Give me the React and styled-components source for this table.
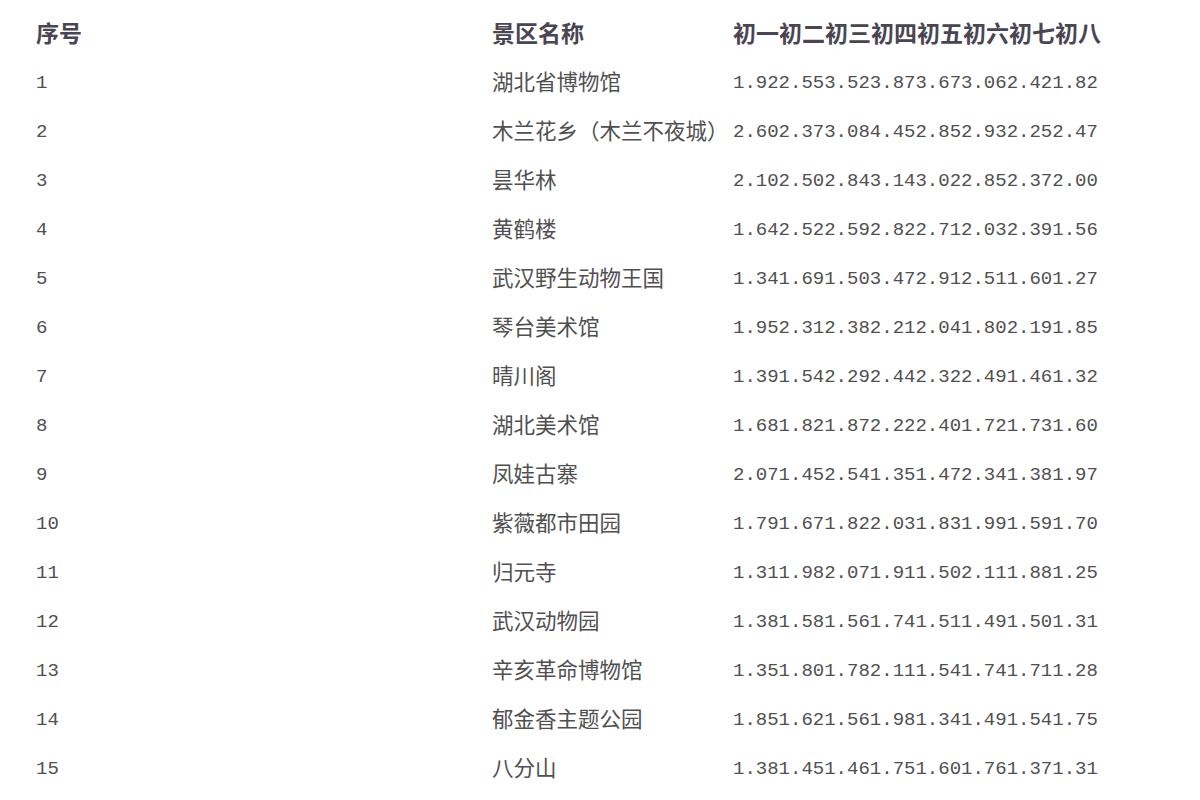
import styled, { createGlobalStyle } from "styled-components";

const rows = [
  ["湖北省博物馆", [1.92, 2.55, 3.52, 3.87, 3.67, 3.06, 2.42, 1.82]],
  ["木兰花乡（木兰不夜城）", [2.6, 2.37, 3.08, 4.45, 2.85, 2.93, 2.25, 2.47]],
  ["昙华林", [2.1, 2.5, 2.84, 3.14, 3.02, 2.85, 2.37, 2.0]],
  ["黄鹤楼", [1.64, 2.52, 2.59, 2.82, 2.71, 2.03, 2.39, 1.56]],
  ["武汉野生动物王国", [1.34, 1.69, 1.5, 3.47, 2.91, 2.51, 1.6, 1.27]],
  ["琴台美术馆", [1.95, 2.31, 2.38, 2.21, 2.04, 1.8, 2.19, 1.85]],
  ["晴川阁", [1.39, 1.54, 2.29, 2.44, 2.32, 2.49, 1.46, 1.32]],
  ["湖北美术馆", [1.68, 1.82, 1.87, 2.22, 2.4, 1.72, 1.73, 1.6]],
  ["凤娃古寨", [2.07, 1.45, 2.54, 1.35, 1.47, 2.34, 1.38, 1.97]],
  ["紫薇都市田园", [1.79, 1.67, 1.82, 2.03, 1.83, 1.99, 1.59, 1.7]],
  ["归元寺", [1.31, 1.98, 2.07, 1.91, 1.5, 2.11, 1.88, 1.25]],
  ["武汉动物园", [1.38, 1.58, 1.56, 1.74, 1.51, 1.49, 1.5, 1.31]],
  ["辛亥革命博物馆", [1.35, 1.8, 1.78, 2.11, 1.54, 1.74, 1.71, 1.28]],
  ["郁金香主题公园", [1.85, 1.62, 1.56, 1.98, 1.34, 1.49, 1.54, 1.75]],
  ["八分山", [1.38, 1.45, 1.46, 1.75, 1.6, 1.76, 1.37, 1.31]],
];

const days = ["初一", "初二", "初三", "初四", "初五", "初六", "初七", "初八"];

const GlobalStyle = createGlobalStyle`
  body {
    margin: 0;
    background: #fff;
  }
`;

const Table = styled.div`
  display: grid;
  grid-template-columns: 456px 241px auto;
  grid-auto-rows: 49px;
  padding: 7px 0 0 36px;
`;

const Head = styled.div`
  display: flex;
  align-items: center;
  white-space: nowrap;
  font-family: "Noto Sans CJK SC", sans-serif;
  font-size: 23px;
  font-weight: 700;
  color: #4a4552;
`;

const Cell = styled.div`
  display: flex;
  align-items: center;
  white-space: nowrap;
  padding-top: ${(p) => (p.$mono ? "4px" : "0")};
  font-family: ${(p) =>
    p.$mono ? `"Liberation Mono", monospace` : `"Noto Sans CJK SC", sans-serif`};
  font-size: ${(p) => (p.$mono ? "19px" : "21.5px")};
  color: #505050;
`;

export default function App() {
  return (
    <>
      <GlobalStyle />
      <Table>
        <Head>序号</Head>
        <Head>景区名称</Head>
        <Head>{days.join("")}</Head>
        {rows.map(([name, vals], i) => [
          <Cell key={`n${i}`} $mono>
            {i + 1}
          </Cell>,
          <Cell key={`s${i}`}>{name}</Cell>,
          <Cell key={`v${i}`} $mono>
            {vals.map((v) => v.toFixed(2)).join("")}
          </Cell>,
        ])}
      </Table>
    </>
  );
}
